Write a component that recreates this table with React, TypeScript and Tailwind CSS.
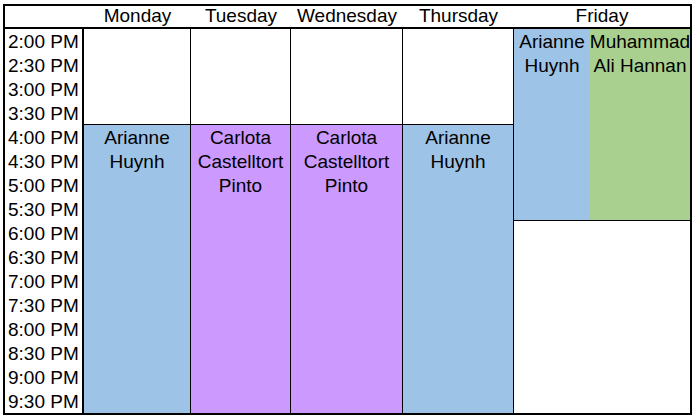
const times = [
  '2:00 PM', '2:30 PM', '3:00 PM', '3:30 PM',
  '4:00 PM', '4:30 PM', '5:00 PM', '5:30 PM',
  '6:00 PM', '6:30 PM', '7:00 PM', '7:30 PM',
  '8:00 PM', '8:30 PM', '9:00 PM', '9:30 PM',
];

function Block({ lines, className }: { lines: string[]; className: string }) {
  return (
    <div className={`flex flex-col items-center pt-[1px] leading-[24px] whitespace-nowrap ${className}`}>
      {lines.map((l) => (
        <span key={l}>{l}</span>
      ))}
    </div>
  );
}

export default function App() {
  return (
    <div className="bg-white w-[696px] h-[418px] pl-[3px] pt-[4px] text-black text-[19px] font-['Liberation_Sans',Arial,sans-serif]">
      <div className="w-[689px] border-2 border-black grid grid-cols-[79px_107px_100px_112px_111px_76px_100px] grid-rows-[23px_repeat(16,24px)]">
        {/* header */}
        <div className="border-b-2 border-black" />
        {['Monday', 'Tuesday', 'Wednesday', 'Thursday'].map((d) => (
          <div key={d} className="border-b-2 border-black flex items-end justify-center leading-[22px]">
            {d}
          </div>
        ))}
        <div className="col-span-2 border-b-2 border-black flex items-end justify-center leading-[22px]">
          Friday
        </div>

        {/* time labels */}
        {times.map((t, i) => (
          <div
            key={t}
            className="col-start-1 border-r-2 border-black flex items-end pl-[3px] leading-[22px]"
            style={{ gridRow: i + 2 }}
          >
            {t}
          </div>
        ))}

        {/* Monday */}
        <div className="col-start-2 row-start-2 row-span-4 border-r border-b border-black" />
        <Block lines={['Arianne', 'Huynh']} className="col-start-2 row-start-6 row-span-12 border-r border-black bg-[#9dc3e6]" />

        {/* Tuesday */}
        <div className="col-start-3 row-start-2 row-span-4 border-r border-b border-black" />
        <Block lines={['Carlota', 'Castelltort', 'Pinto']} className="col-start-3 row-start-6 row-span-12 border-r border-black bg-[#cc99ff]" />

        {/* Wednesday */}
        <div className="col-start-4 row-start-2 row-span-4 border-r border-b border-black" />
        <Block lines={['Carlota', 'Castelltort', 'Pinto']} className="col-start-4 row-start-6 row-span-12 border-r border-black bg-[#cc99ff]" />

        {/* Thursday */}
        <div className="col-start-5 row-start-2 row-span-4 border-r border-b border-black" />
        <Block lines={['Arianne', 'Huynh']} className="col-start-5 row-start-6 row-span-12 border-r border-black bg-[#9dc3e6]" />

        {/* Friday */}
        <Block lines={['Arianne', 'Huynh']} className="col-start-6 row-start-2 row-span-8 border-b border-black bg-[#9dc3e6]" />
        <Block lines={['Muhammad', 'Ali Hannan']} className="col-start-7 row-start-2 row-span-8 border-b border-black bg-[#a9d08e]" />
        <div className="col-start-6 col-span-2 row-start-10 row-span-8" />
      </div>
    </div>
  );
}
